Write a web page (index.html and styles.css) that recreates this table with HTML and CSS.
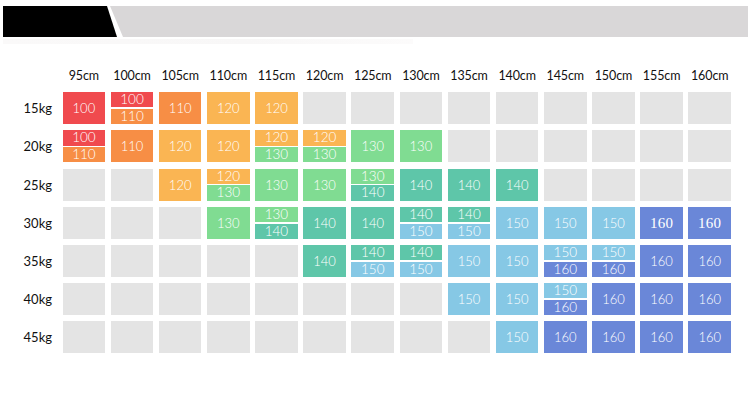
FILE: index.html
```html
<!DOCTYPE html>
<html lang="en">
<head>
<meta charset="utf-8">
<title>Size chart</title>
<link rel="stylesheet" href="styles.css">
</head>
<body>
<div class="banner">
  <div class="banner-black"></div>
  <div class="banner-gray"></div>
</div>
<div class="banner-shadow"></div>
<div class="chart" id="chart">
  <div class="corner"></div>
  <div class="hd">95cm</div><div class="hd">100cm</div><div class="hd">105cm</div><div class="hd">110cm</div><div class="hd">115cm</div><div class="hd">120cm</div><div class="hd">125cm</div><div class="hd">130cm</div><div class="hd">135cm</div><div class="hd">140cm</div><div class="hd">145cm</div><div class="hd">150cm</div><div class="hd">155cm</div><div class="hd">160cm</div>

  <div class="rl">15kg</div>
  <div class="c s100">100</div>
  <div class="c sp"><span class="s100">100</span><span class="s110">110</span></div>
  <div class="c s110">110</div>
  <div class="c s120">120</div>
  <div class="c s120">120</div>
  <div class="c e"></div><div class="c e"></div><div class="c e"></div><div class="c e"></div><div class="c e"></div><div class="c e"></div><div class="c e"></div><div class="c e"></div><div class="c e"></div>

  <div class="rl">20kg</div>
  <div class="c sp"><span class="s100">100</span><span class="s110">110</span></div>
  <div class="c s110">110</div>
  <div class="c s120">120</div>
  <div class="c s120">120</div>
  <div class="c sp"><span class="s120">120</span><span class="s130">130</span></div>
  <div class="c sp"><span class="s120">120</span><span class="s130">130</span></div>
  <div class="c s130">130</div>
  <div class="c s130">130</div>
  <div class="c e"></div><div class="c e"></div><div class="c e"></div><div class="c e"></div><div class="c e"></div><div class="c e"></div>

  <div class="rl">25kg</div>
  <div class="c e"></div><div class="c e"></div>
  <div class="c s120">120</div>
  <div class="c sp"><span class="s120">120</span><span class="s130">130</span></div>
  <div class="c s130">130</div>
  <div class="c s130">130</div>
  <div class="c sp"><span class="s130">130</span><span class="s140">140</span></div>
  <div class="c s140">140</div>
  <div class="c s140">140</div>
  <div class="c s140">140</div>
  <div class="c e"></div><div class="c e"></div><div class="c e"></div><div class="c e"></div>

  <div class="rl">30kg</div>
  <div class="c e"></div><div class="c e"></div><div class="c e"></div>
  <div class="c s130">130</div>
  <div class="c sp"><span class="s130">130</span><span class="s140">140</span></div>
  <div class="c s140">140</div>
  <div class="c s140">140</div>
  <div class="c sp"><span class="s140">140</span><span class="s150">150</span></div>
  <div class="c sp"><span class="s140">140</span><span class="s150">150</span></div>
  <div class="c s150">150</div>
  <div class="c s150">150</div>
  <div class="c s150">150</div>
  <div class="c s160 serif">160</div>
  <div class="c s160 serif">160</div>

  <div class="rl">35kg</div>
  <div class="c e"></div><div class="c e"></div><div class="c e"></div><div class="c e"></div><div class="c e"></div>
  <div class="c s140">140</div>
  <div class="c sp"><span class="s140">140</span><span class="s150">150</span></div>
  <div class="c sp"><span class="s140">140</span><span class="s150">150</span></div>
  <div class="c s150">150</div>
  <div class="c s150">150</div>
  <div class="c sp"><span class="s150">150</span><span class="s160">160</span></div>
  <div class="c sp"><span class="s150">150</span><span class="s160">160</span></div>
  <div class="c s160">160</div>
  <div class="c s160">160</div>

  <div class="rl">40kg</div>
  <div class="c e"></div><div class="c e"></div><div class="c e"></div><div class="c e"></div><div class="c e"></div><div class="c e"></div><div class="c e"></div><div class="c e"></div>
  <div class="c s150">150</div>
  <div class="c s150">150</div>
  <div class="c sp"><span class="s150">150</span><span class="s160">160</span></div>
  <div class="c s160">160</div>
  <div class="c s160">160</div>
  <div class="c s160">160</div>

  <div class="rl">45kg</div>
  <div class="c e"></div><div class="c e"></div><div class="c e"></div><div class="c e"></div><div class="c e"></div><div class="c e"></div><div class="c e"></div><div class="c e"></div><div class="c e"></div>
  <div class="c s150">150</div>
  <div class="c s160">160</div>
  <div class="c s160">160</div>
  <div class="c s160">160</div>
  <div class="c s160">160</div>
</div>
</body>
</html>
```
FILE: styles.css
```css
html, body {
  margin: 0;
  padding: 0;
  background: #ffffff;
}
body {
  font-family: Lato, "Open Sans", "Liberation Sans", sans-serif;
  width: 750px;
  height: 418px;
  overflow: hidden;
}
.banner {
  display: flex;
  height: 31px;
  margin: 6px 2px 0 3px;
}
.banner-black {
  width: 114px;
  flex: none;
  background: #000000;
  clip-path: polygon(0 0, 104px 0, 114px 100%, 0 100%);
}
.banner-gray {
  flex: 1;
  margin-left: -7px;
  background: #d9d7d8;
  clip-path: polygon(0 0, 100% 0, 100% 100%, 13px 100%);
}
.banner-shadow {
  width: 410px;
  height: 5px;
  margin: 2px 0 0 3px;
  background: linear-gradient(90deg, #faf9f9, #f8f7f7 60%, #fcfbfb);
}
.chart {
  display: grid;
  grid-template-columns: 57px repeat(14, 42.5px);
  grid-template-rows: 20px repeat(7, 32px);
  column-gap: 5.65px;
  row-gap: 6.2px;
  margin-top: 22px;
}
.hd {
  font-size: 12.5px;
  line-height: 20px;
  color: #111111;
  text-align: center;
  white-space: nowrap;
  letter-spacing: -0.1px;
}
.rl {
  font-size: 13px;
  line-height: 32px;
  color: #111111;
  text-align: right;
  padding-right: 5px;
}
.c {
  color: #ffffff;
  font-size: 13px;
  font-weight: 300;
  line-height: 32px;
  text-align: center;
}
.c.e {
  background: #e4e4e4;
}
.c.sp {
  display: flex;
  flex-direction: column;
  gap: 1.5px;
}
.c.sp span {
  flex: 1;
  font-size: 13.5px;
  line-height: 15px;
  display: block;
}
.c.serif {
  font-family: "Liberation Serif", serif;
  font-weight: 400;
  font-size: 15px;
  letter-spacing: 0.3px;
}
.s100 { background: #f04a4e; }
.s110 { background: #f78e45; }
.s120 { background: #fab553; }
.s130 { background: #80dc92; }
.s140 { background: #5ec6a9; }
.s150 { background: #86c8e5; }
.s160 { background: #6a87d8; }
```
